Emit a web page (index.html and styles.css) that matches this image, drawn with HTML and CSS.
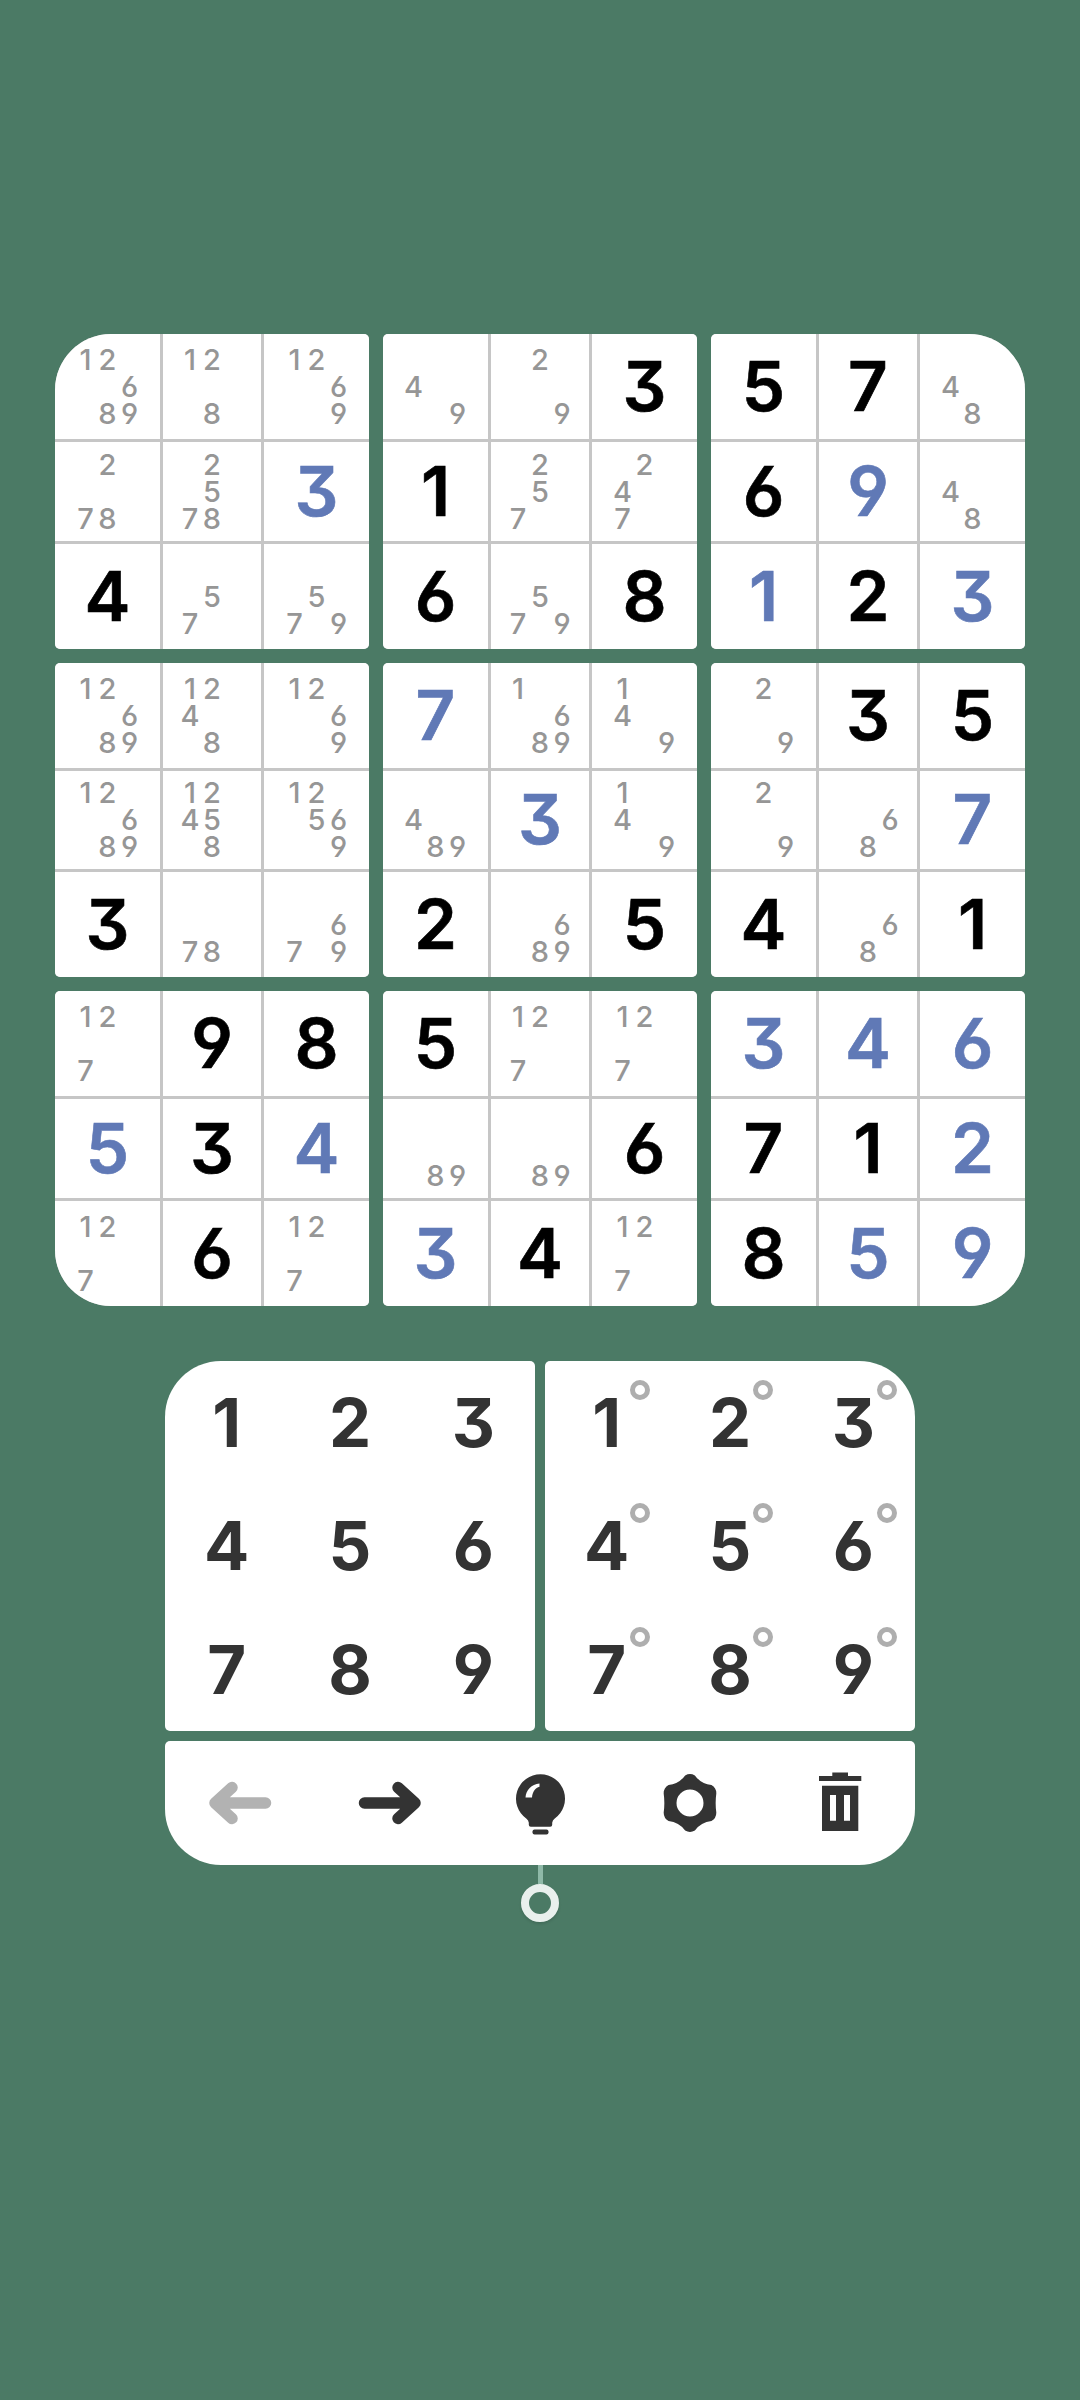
FILE: index.html
```html
<!DOCTYPE html>
<html lang="en">
<head>
<meta charset="utf-8">
<title>Sudoku</title>
<link rel="stylesheet" href="styles.css">
</head>
<body>
<main class="game">
  <section class="board">
    <div class="block">
      <div class="cell"><span class="n c1 r1">1</span><span class="n c2 r1">2</span><span class="n c3 r2">6</span><span class="n c2 r3">8</span><span class="n c3 r3">9</span></div>
      <div class="cell"><span class="n c1 r1">1</span><span class="n c2 r1">2</span><span class="n c2 r3">8</span></div>
      <div class="cell"><span class="n c1 r1">1</span><span class="n c2 r1">2</span><span class="n c3 r2">6</span><span class="n c3 r3">9</span></div>
      <div class="cell"><span class="n c2 r1">2</span><span class="n c1 r3">7</span><span class="n c2 r3">8</span></div>
      <div class="cell"><span class="n c2 r1">2</span><span class="n c2 r2">5</span><span class="n c1 r3">7</span><span class="n c2 r3">8</span></div>
      <div class="cell entry">3</div>
      <div class="cell given">4</div>
      <div class="cell"><span class="n c2 r2">5</span><span class="n c1 r3">7</span></div>
      <div class="cell"><span class="n c2 r2">5</span><span class="n c1 r3">7</span><span class="n c3 r3">9</span></div>
    </div>
    <div class="block">
      <div class="cell"><span class="n c1 r2">4</span><span class="n c3 r3">9</span></div>
      <div class="cell"><span class="n c2 r1">2</span><span class="n c3 r3">9</span></div>
      <div class="cell given">3</div>
      <div class="cell given">1</div>
      <div class="cell"><span class="n c2 r1">2</span><span class="n c2 r2">5</span><span class="n c1 r3">7</span></div>
      <div class="cell"><span class="n c2 r1">2</span><span class="n c1 r2">4</span><span class="n c1 r3">7</span></div>
      <div class="cell given">6</div>
      <div class="cell"><span class="n c2 r2">5</span><span class="n c1 r3">7</span><span class="n c3 r3">9</span></div>
      <div class="cell given">8</div>
    </div>
    <div class="block">
      <div class="cell given">5</div>
      <div class="cell given">7</div>
      <div class="cell"><span class="n c1 r2">4</span><span class="n c2 r3">8</span></div>
      <div class="cell given">6</div>
      <div class="cell entry">9</div>
      <div class="cell"><span class="n c1 r2">4</span><span class="n c2 r3">8</span></div>
      <div class="cell entry">1</div>
      <div class="cell given">2</div>
      <div class="cell entry">3</div>
    </div>
    <div class="block">
      <div class="cell"><span class="n c1 r1">1</span><span class="n c2 r1">2</span><span class="n c3 r2">6</span><span class="n c2 r3">8</span><span class="n c3 r3">9</span></div>
      <div class="cell"><span class="n c1 r1">1</span><span class="n c2 r1">2</span><span class="n c1 r2">4</span><span class="n c2 r3">8</span></div>
      <div class="cell"><span class="n c1 r1">1</span><span class="n c2 r1">2</span><span class="n c3 r2">6</span><span class="n c3 r3">9</span></div>
      <div class="cell"><span class="n c1 r1">1</span><span class="n c2 r1">2</span><span class="n c3 r2">6</span><span class="n c2 r3">8</span><span class="n c3 r3">9</span></div>
      <div class="cell"><span class="n c1 r1">1</span><span class="n c2 r1">2</span><span class="n c1 r2">4</span><span class="n c2 r2">5</span><span class="n c2 r3">8</span></div>
      <div class="cell"><span class="n c1 r1">1</span><span class="n c2 r1">2</span><span class="n c2 r2">5</span><span class="n c3 r2">6</span><span class="n c3 r3">9</span></div>
      <div class="cell given">3</div>
      <div class="cell"><span class="n c1 r3">7</span><span class="n c2 r3">8</span></div>
      <div class="cell"><span class="n c3 r2">6</span><span class="n c1 r3">7</span><span class="n c3 r3">9</span></div>
    </div>
    <div class="block">
      <div class="cell entry">7</div>
      <div class="cell"><span class="n c1 r1">1</span><span class="n c3 r2">6</span><span class="n c2 r3">8</span><span class="n c3 r3">9</span></div>
      <div class="cell"><span class="n c1 r1">1</span><span class="n c1 r2">4</span><span class="n c3 r3">9</span></div>
      <div class="cell"><span class="n c1 r2">4</span><span class="n c2 r3">8</span><span class="n c3 r3">9</span></div>
      <div class="cell entry">3</div>
      <div class="cell"><span class="n c1 r1">1</span><span class="n c1 r2">4</span><span class="n c3 r3">9</span></div>
      <div class="cell given">2</div>
      <div class="cell"><span class="n c3 r2">6</span><span class="n c2 r3">8</span><span class="n c3 r3">9</span></div>
      <div class="cell given">5</div>
    </div>
    <div class="block">
      <div class="cell"><span class="n c2 r1">2</span><span class="n c3 r3">9</span></div>
      <div class="cell given">3</div>
      <div class="cell given">5</div>
      <div class="cell"><span class="n c2 r1">2</span><span class="n c3 r3">9</span></div>
      <div class="cell"><span class="n c3 r2">6</span><span class="n c2 r3">8</span></div>
      <div class="cell entry">7</div>
      <div class="cell given">4</div>
      <div class="cell"><span class="n c3 r2">6</span><span class="n c2 r3">8</span></div>
      <div class="cell given">1</div>
    </div>
    <div class="block">
      <div class="cell"><span class="n c1 r1">1</span><span class="n c2 r1">2</span><span class="n c1 r3">7</span></div>
      <div class="cell given">9</div>
      <div class="cell given">8</div>
      <div class="cell entry">5</div>
      <div class="cell given">3</div>
      <div class="cell entry">4</div>
      <div class="cell"><span class="n c1 r1">1</span><span class="n c2 r1">2</span><span class="n c1 r3">7</span></div>
      <div class="cell given">6</div>
      <div class="cell"><span class="n c1 r1">1</span><span class="n c2 r1">2</span><span class="n c1 r3">7</span></div>
    </div>
    <div class="block">
      <div class="cell given">5</div>
      <div class="cell"><span class="n c1 r1">1</span><span class="n c2 r1">2</span><span class="n c1 r3">7</span></div>
      <div class="cell"><span class="n c1 r1">1</span><span class="n c2 r1">2</span><span class="n c1 r3">7</span></div>
      <div class="cell"><span class="n c2 r3">8</span><span class="n c3 r3">9</span></div>
      <div class="cell"><span class="n c2 r3">8</span><span class="n c3 r3">9</span></div>
      <div class="cell given">6</div>
      <div class="cell entry">3</div>
      <div class="cell given">4</div>
      <div class="cell"><span class="n c1 r1">1</span><span class="n c2 r1">2</span><span class="n c1 r3">7</span></div>
    </div>
    <div class="block">
      <div class="cell entry">3</div>
      <div class="cell entry">4</div>
      <div class="cell entry">6</div>
      <div class="cell given">7</div>
      <div class="cell given">1</div>
      <div class="cell entry">2</div>
      <div class="cell given">8</div>
      <div class="cell entry">5</div>
      <div class="cell entry">9</div>
    </div>
  </section>

  <section class="controls">
    <div class="pads">
      <div class="pad">
        <button class="key">1</button><button class="key">2</button><button class="key">3</button>
        <button class="key">4</button><button class="key">5</button><button class="key">6</button>
        <button class="key">7</button><button class="key">8</button><button class="key">9</button>
      </div>
      <div class="pad">
        <button class="key pencil">1</button><button class="key pencil">2</button><button class="key pencil">3</button>
        <button class="key pencil">4</button><button class="key pencil">5</button><button class="key pencil">6</button>
        <button class="key pencil">7</button><button class="key pencil">8</button><button class="key pencil">9</button>
      </div>
    </div>
    <div class="toolbar">
      <div class="tool">
        <svg class="icon arrow back" viewBox="0 0 70 50"><path d="M9.5 25H60M43 9.5 60 25 43 40.5"/></svg>
      </div>
      <div class="tool">
        <svg class="icon arrow" viewBox="0 0 70 50"><path d="M9.5 25H60M43 9.5 60 25 43 40.5"/></svg>
      </div>
      <div class="tool">
        <svg class="icon glyph" viewBox="0 0 60 70">
          <path d="M30.500 6.200a24.500 24.500 0 0 1 14 44.600q-2 1.500-2.300 3.900v2q0 2-2 2H20.800q-2 0-2-2v-2q-.3-2.400-2.300-3.900a24.500 24.500 0 0 1 14-44.600Z"/>
          <rect x="22.500" y="61.500" width="16" height="5" rx="2"/>
          <path class="shine" d="M15.500 29.400C16 22 21.500 16 29.500 15.400V18.800C25.500 19.500 22.500 24 22 29.400Z"/>
        </svg>
      </div>
      <div class="tool">
        <svg class="icon glyph gear" viewBox="0 0 60 60">
          <path fill-rule="evenodd" d="M25.140 2.430Q30-.5 34.860 2.430Q41 10.950 51.450 12Q56.410 14.750 56.310 20.420Q55 30 56.310 39.580Q56.410 45.250 51.450 48Q41 49.050 34.860 57.570Q30 60.500 25.140 57.570Q19 49.050 8.550 48Q3.590 45.250 3.690 39.580Q5 30 3.690 20.420Q3.590 14.750 8.550 12Q19 10.950 25.140 2.430ZM30 16.500a13.500 13.500 0 1 0 0 27 13.500 13.500 0 0 0 0-27Z"/>
        </svg>
      </div>
      <div class="tool">
        <svg class="icon glyph" viewBox="0 0 70 70">
          <path d="M27.300 4.500H43V8H56.300V13H14V8H27.300Z"/>
          <path fill-rule="evenodd" d="M17 17.700H53.300V63H17ZM25 27V52.700H31V27ZM39 27V52.700H45V27Z"/>
        </svg>
      </div>
    </div>
    <div class="pin"><span class="pin-stem"></span><span class="pin-ring"></span></div>
  </section>
</main>
</body>
</html>
```

FILE: styles.css
```css
*,
*::after {
  box-sizing: border-box;
}

html,
body {
  margin: 0;
  height: 2400px;
  background: #4b7a65;
}

body {
  font-family: Inter, "Noto Sans", sans-serif;
  font-feature-settings: "cv03", "cv04", "cv09";
}

.game {
  display: flex;
  flex-direction: column;
  align-items: center;
  padding-top: 334px;
}

/* Puzzle board: nine blocks, clipped to a rounded outline */
.board {
  display: grid;
  grid-template-columns: repeat(3, 314px);
  grid-template-rows: repeat(3, 314.5px);
  gap: 14px;
  width: 970px;
  border-radius: 56px;
  overflow: hidden;
}

.block {
  display: grid;
  grid-template-columns: 105px 98px 105px;
  grid-template-rows: 105px 98.5px 105px;
  gap: 3px;
  background: #c6c6c6;
  border-radius: 5px;
  overflow: hidden;
}

.cell {
  display: grid;
  grid-template-columns: repeat(3, 22px);
  grid-template-rows: repeat(3, 27px);
  place-content: center;
  background: #fff;
  font-size: 69px;
  font-weight: 600;
  line-height: 1;
}

.given,
.entry {
  display: flex;
  align-items: center;
  justify-content: center;
  -webkit-text-stroke: 0.6px currentColor;
}

.given {
  color: #000;
}

.entry {
  color: #6079b6;
}

/* Pencil marks sit on a fixed 3x3 lattice inside the cell */
.n {
  display: flex;
  align-items: center;
  justify-content: center;
  color: #969696;
  font-size: 29px;
  font-weight: 500;
  line-height: 27px;
}

.c1 { grid-column: 1; }
.c2 { grid-column: 2; }
.c3 { grid-column: 3; }
.r1 { grid-row: 1; }
.r2 { grid-row: 2; }
.r3 { grid-row: 3; }

.controls {
  display: flex;
  flex-direction: column;
  width: 750px;
  margin-top: 55.500px;
}

.pads {
  display: grid;
  grid-template-columns: repeat(2, 370px);
  gap: 10px;
  border-radius: 56px 56px 0 0;
  overflow: hidden;
}

.pad {
  display: grid;
  grid-template-columns: repeat(3, 1fr);
  grid-template-rows: repeat(3, 1fr);
  height: 370px;
  background: #fff;
  border-radius: 5px;
}

.key {
  position: relative;
  display: flex;
  align-items: center;
  justify-content: center;
  padding: 0;
  border: 0;
  background: none;
  color: #333;
  font: inherit;
  font-feature-settings: inherit;
  font-size: 67px;
  font-weight: 700;
  line-height: 1;
}

/* Small ring marks the pencil-mode keys */
.pencil::after {
  content: "";
  position: absolute;
  top: 19px;
  left: 85px;
  width: 20px;
  height: 20px;
  border: 5.500px solid #aeaeae;
  border-radius: 50%;
}

.toolbar {
  display: flex;
  height: 124px;
  margin-top: 10px;
  background: #fff;
  border-radius: 5px 5px 56px 56px;
}

.tool {
  flex: 1;
  display: flex;
  align-items: center;
  justify-content: center;
}

.icon {
  display: block;
  flex: none;
}

.arrow {
  width: 70px;
  height: 50px;
  fill: none;
  stroke: #333;
  stroke-width: 11.500;
  stroke-linecap: round;
  stroke-linejoin: round;
}

.back {
  stroke: #b2b2b2;
  transform: scaleX(-1);
}

.glyph {
  width: 70px;
  height: 70px;
  fill: #333;
}

.gear {
  width: 60px;
  height: 60px;
}

.shine {
  fill: #fff;
}

.pin {
  display: flex;
  flex-direction: column;
  align-items: center;
}

.pin-stem {
  width: 5px;
  height: 19px;
  background: #8fb9a8;
}

.pin-ring {
  width: 38px;
  height: 38px;
  border: 8px solid #e9f0ed;
  border-radius: 50%;
  box-shadow: 0 2px 3px rgba(0, 0, 0, 0.12);
}
```
